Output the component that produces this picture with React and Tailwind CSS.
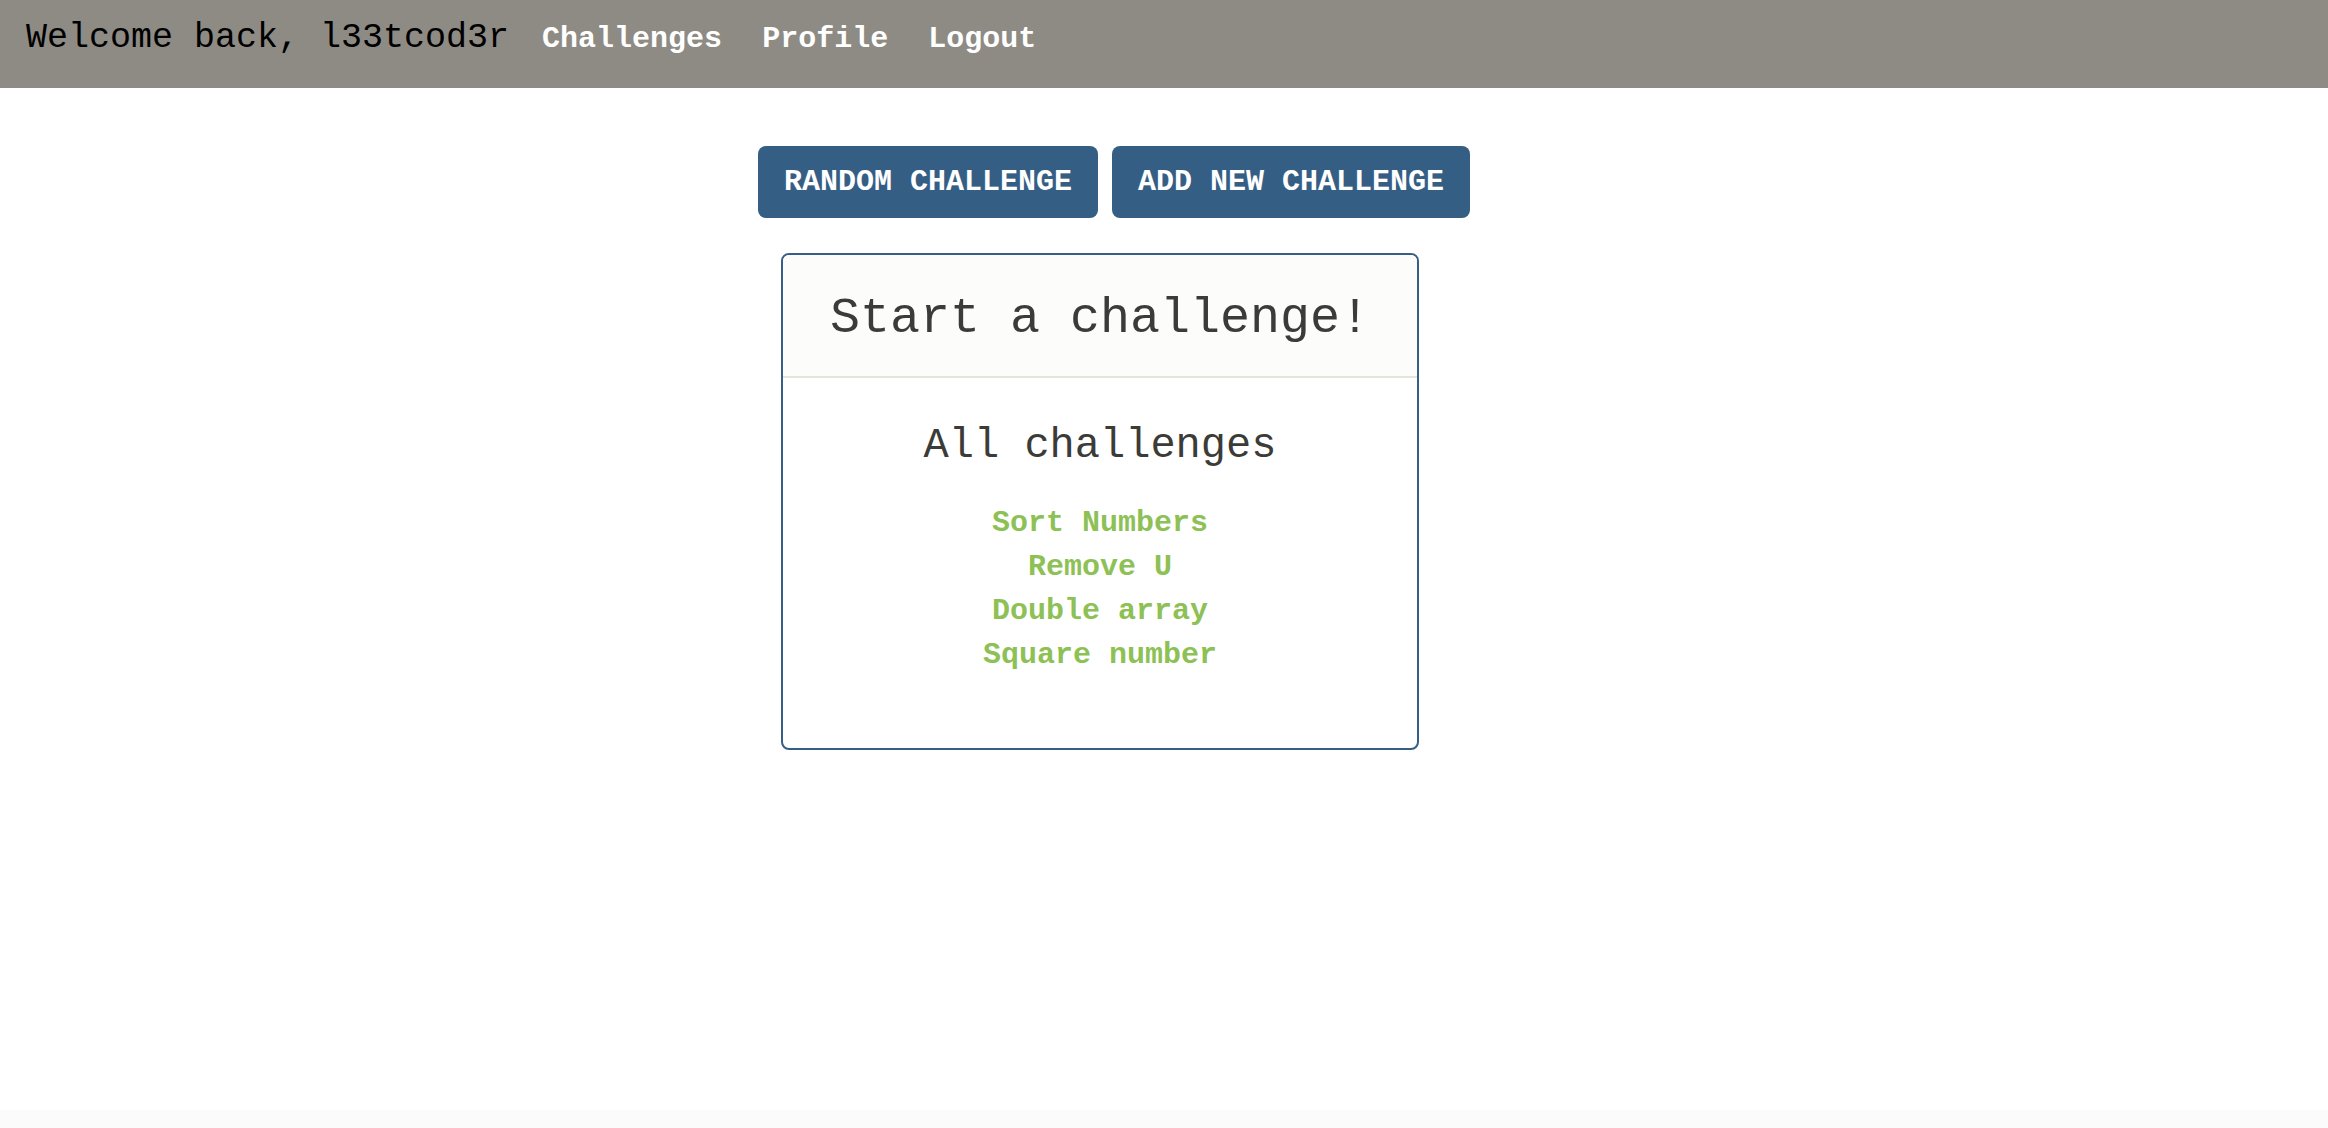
const links = ['Challenges', 'Profile', 'Logout'];

const challenges = ['Sort Numbers', 'Remove U', 'Double array', 'Square number'];

function Header() {
  return (
    <header className="h-[88px] bg-[#8e8b84] flex items-center pl-[26px] pb-[11px]">
      <span className="text-[35px] leading-none text-black">Welcome back, l33tcod3r</span>
      <nav className="flex items-center gap-[40px] ml-[33px]">
        {links.map(l => (
          <a key={l} href="#" className="text-[30px] leading-none font-bold text-white">
            {l}
          </a>
        ))}
      </nav>
    </header>
  );
}

function ChallengeCard() {
  return (
    <div className="ml-[781px] mt-[35px] w-[638px] h-[497px] border-2 border-[#365f86] rounded-[8px] overflow-hidden">
      <div className="h-[123px] bg-[#fcfcfa] border-b-2 border-[#e5e3da] flex items-center justify-center">
        <h1 className="text-[50px] leading-none text-[#3b3b38] pt-[6px]">Start a challenge!</h1>
      </div>
      <div className="flex flex-col items-center pt-[47px]">
        <h2 className="text-[42px] leading-none text-[#3b3b38]">All challenges</h2>
        <ul className="mt-[34px] flex flex-col items-center">
          {challenges.map(c => (
            <li key={c}>
              <a href="#" className="block text-[30px] leading-[44px] font-bold text-[#8dc155]">{c}</a>
            </li>
          ))}
        </ul>
      </div>
    </div>
  );
}

export default function App() {
  return (
    <div className="min-h-screen flex flex-col bg-white font-['Liberation_Mono',monospace]">
      <Header />
      <main className="flex-1">
        <div className="ml-[758px] mt-[58px] flex gap-[14px]">
          <button className="h-[72px] px-[26px] rounded-[8px] bg-[#355e85] text-white text-[30px] font-bold leading-none">
            RANDOM CHALLENGE
          </button>
          <button className="h-[72px] px-[26px] rounded-[8px] bg-[#355e85] text-white text-[30px] font-bold leading-none">
            ADD NEW CHALLENGE
          </button>
        </div>
        <ChallengeCard />
      </main>
      <div className="h-[18px] bg-[#fbfbfb]" />
    </div>
  );
}
